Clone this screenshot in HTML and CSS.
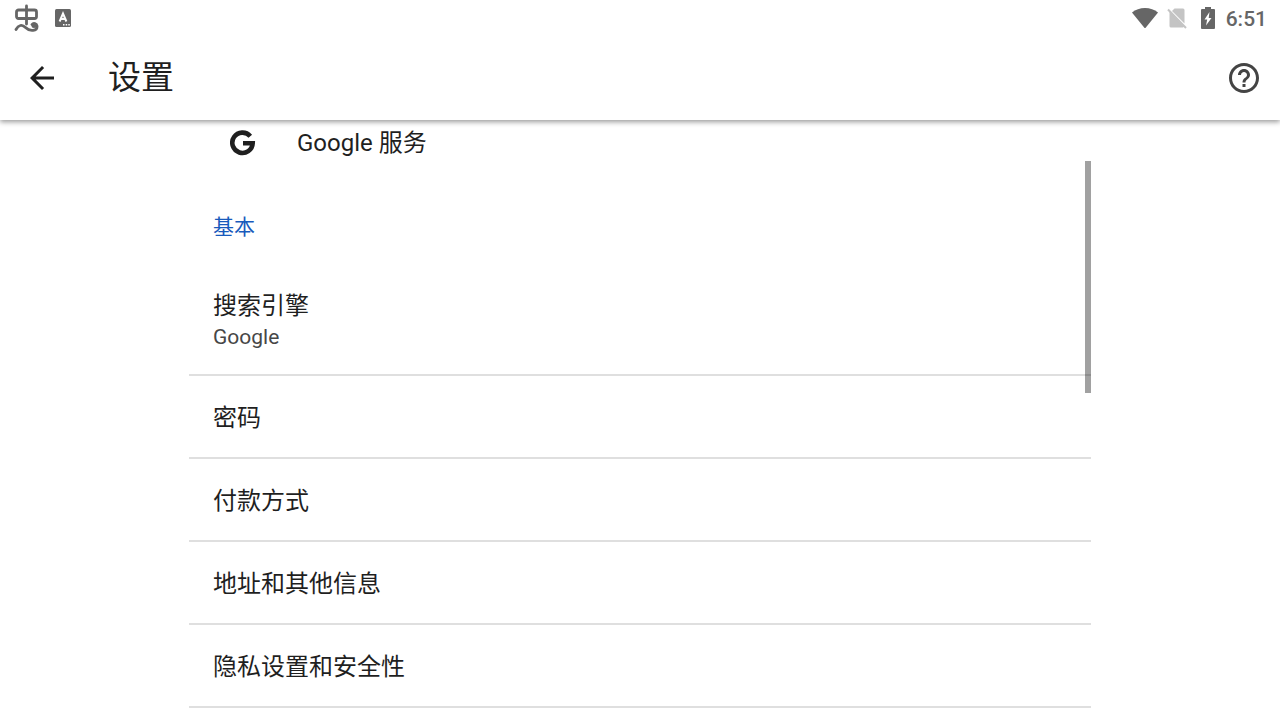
FILE: index.html
```html
<!DOCTYPE html>
<html lang="zh-CN">
<head>
<meta charset="utf-8">
<meta name="viewport" content="width=device-width, initial-scale=1">
<title>设置</title>
<link rel="stylesheet" href="styles.css">
</head>
<body>
<div class="screen">
  <div class="status-bar">
    <div class="status-group notifications">
      <svg width="26" height="28" viewBox="0 0 26 28" fill="none" stroke="currentColor" stroke-width="2.800" stroke-linecap="round" stroke-linejoin="round" aria-hidden="true">
        <path d="M12.500 2V20M5 6H20.500a2 2 0 0 1 2 2V12.500a2 2 0 0 1-2 2H4.500a2 2 0 0 1-2-2V8a2 2 0 0 1 2-2z"/>
        <path d="M2 25.500c2.500-4.500 6-5.500 9.500-2 4.500 4.500 12 3.500 11.500-1.500-.3-2.500-3.500-3.500-5-1.500"/>
        <circle cx="20" cy="21.500" r="2.500" fill="currentColor" stroke="none"/>
      </svg>
      <svg width="16" height="18" viewBox="0 0 16 18" aria-hidden="true">
        <rect width="16" height="18" rx="1.500" fill="currentColor"/>
        <path d="M4.600 12.500 8 4.500l3.400 8M6 10h4" fill="none" stroke="#fff" stroke-width="2"/>
        <path d="M8 15h1.500v1.500H8zM10.700 15h1.500v1.500h-1.500zM13.300 15h1.500v1.500h-1.500z" fill="#fff"/>
      </svg>
    </div>
    <div class="status-group system">
      <svg class="wifi" width="26" height="20" viewBox="0 0 26 20" fill="currentColor" aria-hidden="true"><path d="M0 4.500C3.500 1.500 8 0 13 0s9.500 1.500 13 4.500L13 20.500z"/></svg>
      <svg class="sim" width="20" height="22" viewBox="0 0 20 22" fill="#c4c4c4" aria-hidden="true">
        <path d="M7.500 1.500h8.500a1.500 1.500 0 0 1 1.500 1.500V16.500L5 4z"/>
        <path d="M2.500 4.500 17 19.500 16 20.500H4a1.500 1.500 0 0 1-1.500-1.500z"/>
        <path d="M1 2.500 19 21" stroke="#c4c4c4" stroke-width="2"/>
      </svg>
      <svg class="battery" width="14" height="22" viewBox="0 0 14 22" aria-hidden="true">
        <path d="M4 0h6v2h3a1 1 0 0 1 1 1v18a1 1 0 0 1-1 1H1a1 1 0 0 1-1-1V3a1 1 0 0 1 1-1h3z" fill="currentColor"/>
        <path d="M8.500 5 3.500 12.500h2.700L5 18.500l5.500-7.500H7.700z" fill="#fff"/>
      </svg>
      <time class="clock">6:51</time>
    </div>
  </div>
  <header class="app-bar">
    <button class="icon-button" type="button" aria-label="返回">
      <svg width="36" height="36" viewBox="0 0 24 24" fill="#1f1f1f" aria-hidden="true"><path d="M20 11H7.830l5.590-5.590L12 4l-8 8 8 8 1.410-1.410L7.830 13H20z"/></svg>
    </button>
    <h1 class="title">设置</h1>
    <button class="icon-button" type="button" aria-label="帮助">
      <svg width="36" height="36" viewBox="0 0 24 24" fill="#444" aria-hidden="true"><path d="M11 18h2v-2h-2zm1-16C6.480 2 2 6.480 2 12s4.480 10 10 10 10-4.480 10-10S17.520 2 12 2zm0 18c-4.410 0-8-3.590-8-8s3.590-8 8-8 8 3.590 8 8-3.590 8-8 8zm0-14c-2.210 0-4 1.790-4 4h2c0-1.100.9-2 2-2s2 .9 2 2c0 2-3 1.750-3 5h2c0-2.250 3-2.500 3-5 0-2.210-1.790-4-4-4z"/></svg>
    </button>
  </header>
  <main class="content">
    <div class="settings">
      <a class="account-row" href="#google">
        <svg width="26" height="26" viewBox="0 0 26 26" fill="none" stroke="#1f1f1f" stroke-width="4.600" aria-hidden="true"><path d="M20.300 6.200A10.200 10.200 0 1 0 22.700 13.200H13"/></svg>
        <span>Google 服务</span>
      </a>
      <h2 class="section-title">基本</h2>
      <a class="row row-detail" href="#search"><span>搜索引擎</span><span class="summary">Google</span></a>
      <a class="row" href="#passwords">密码</a>
      <a class="row" href="#payments">付款方式</a>
      <a class="row" href="#addresses">地址和其他信息</a>
      <a class="row" href="#privacy">隐私设置和安全性</a>
      <div class="scroll-thumb"></div>
    </div>
  </main>
</div>
</body>
</html>
```
FILE: styles.css
```css
* {
  box-sizing: border-box;
}

body {
  margin: 0;
  background: #fff;
  color: #1f1f1f;
  font-family: Roboto, "Noto Sans CJK SC", sans-serif;
  font-size: 24px;
  line-height: 32px;
}

svg {
  display: block;
  flex: none;
}

a {
  color: inherit;
  text-decoration: none;
}

.screen {
  display: flex;
  flex-direction: column;
  height: 100vh;
  overflow: hidden;
}

.status-bar {
  display: flex;
  flex: none;
  justify-content: space-between;
  height: 36px;
  padding: 0 13px 0 14px;
  background: #fff;
  color: #666;
  z-index: 2;
}

.status-group {
  display: flex;
  align-items: center;
}

.notifications {
  gap: 15px;
}

.wifi {
  margin-right: 9px;
}

.sim {
  margin-right: 14px;
}

.battery {
  margin-right: 11px;
}

.clock {
  padding-top: 2px;
  font-size: 21px;
  font-weight: 500;
}

.app-bar {
  display: flex;
  flex: none;
  align-items: center;
  height: 84px;
  padding: 0 18px 0 24px;
  background: #fff;
  box-shadow: 0 2px 5px rgba(0, 0, 0, 0.4);
  z-index: 1;
}

.icon-button {
  padding: 0;
  border: 0;
  background: none;
}

.title {
  flex: 1;
  margin: 0;
  padding-left: 48px;
  font-size: 33px;
  font-weight: 400;
  line-height: 40px;
}

.content {
  flex: 1;
  min-height: 0;
  overflow: hidden;
  padding: 0 189px;
}

.settings {
  position: relative;
}

.account-row {
  display: flex;
  align-items: center;
  gap: 41px;
  height: 46px;
  padding: 0 41px;
}

.section-title {
  margin: 0;
  padding: 47px 24px 24px;
  color: #185abc;
  font-size: 21px;
  font-weight: 400;
  line-height: 28px;
}

.row {
  display: block;
  padding: 26px 24px 23px;
  border-bottom: 2px solid #dfdfdf;
}

.row-detail {
  display: flex;
  flex-direction: column;
  padding: 25px 24px 22px;
}

.summary {
  color: #474747;
  font-size: 21px;
  line-height: 30px;
}

.scroll-thumb {
  position: absolute;
  top: 41px;
  right: 0;
  width: 6px;
  height: 232px;
  background: rgba(0, 0, 0, 0.37);
}
```
